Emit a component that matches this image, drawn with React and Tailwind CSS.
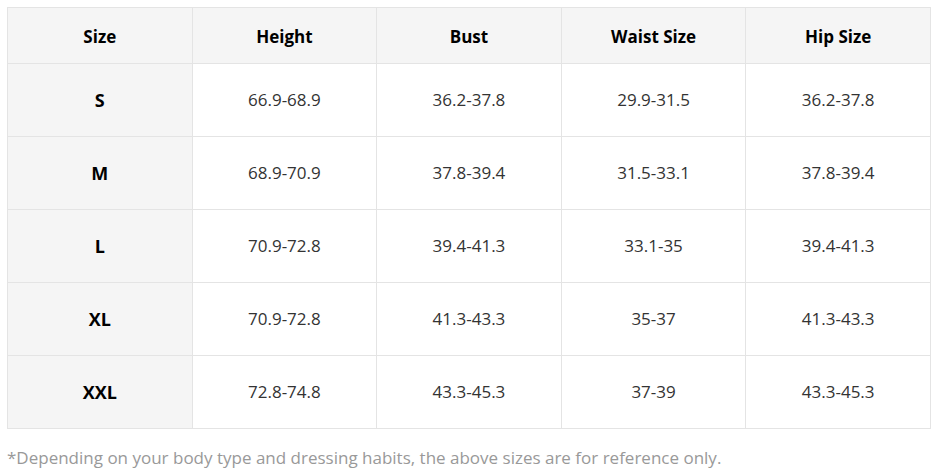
const headers = ["Size", "Height", "Bust", "Waist Size", "Hip Size"];

const rows = [
    ["S", "66.9-68.9", "36.2-37.8", "29.9-31.5", "36.2-37.8"],
    ["M", "68.9-70.9", "37.8-39.4", "31.5-33.1", "37.8-39.4"],
    ["L", "70.9-72.8", "39.4-41.3", "33.1-35", "39.4-41.3"],
    ["XL", "70.9-72.8", "41.3-43.3", "35-37", "41.3-43.3"],
    ["XXL", "72.8-74.8", "43.3-45.3", "37-39", "43.3-45.3"],
];

export default function App() {
    return (
        <div className="bg-white w-[941px] h-[472px] pt-[7px] pl-[7px]" style={{ fontFamily: '"Open Sans", "Noto Sans", sans-serif' }}>
            <table className="w-[924px] border-collapse table-fixed">
                <thead>
                    <tr className="h-[56px] bg-[#f5f5f5]">
                        {headers.map((h) => (
                            <th key={h} className="border border-[#e4e4e4] pt-[2px] text-[17px] font-bold text-black text-center">
                                {h}
                            </th>
                        ))}
                    </tr>
                </thead>
                <tbody>
                    {rows.map((r) => (
                        <tr key={r[0]} className="h-[73px]">
                            {r.map((c, i) => (
                                <td
                                    key={i}
                                    className={
                                        i === 0
                                            ? "border border-[#e4e4e4] bg-[#f5f5f5] text-center text-[18px] font-bold text-black"
                                            : "border border-[#e4e4e4] bg-white text-center text-[17px] text-[#333]"
                                    }
                                >
                                    {c}
                                </td>
                            ))}
                        </tr>
                    ))}
                </tbody>
            </table>
            <p className="mt-[16px] text-[17px] text-[#999]">
                *Depending on your body type and dressing habits, the above sizes are for reference only.
            </p>
        </div>
    );
}
